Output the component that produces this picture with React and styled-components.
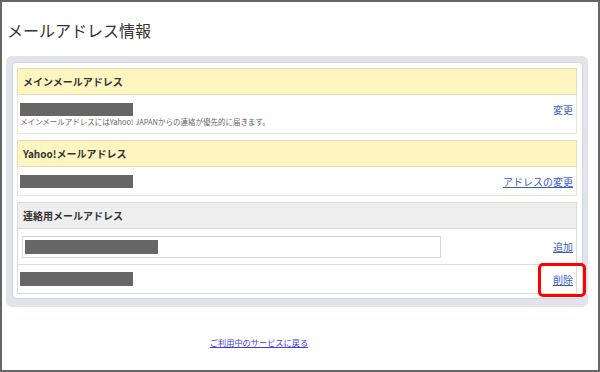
import React from "react";
import styled, { createGlobalStyle } from "styled-components";

const GlobalStyle = createGlobalStyle`
  * { box-sizing: border-box; }
  body {
    margin: 0;
    background: #fff;
    font-family: "Noto Sans CJK JP", "Noto Sans", sans-serif;
    color: #333;
  }
`;

const Frame = styled.div`
  width: 600px;
  height: 372px;
  border: 2px solid #666;
  background: #fff;
`;

const Title = styled.h1`
  margin: 0;
  padding: 18px 0 0 5px;
  font-size: 16px;
  line-height: 20px;
  font-weight: 400;
  color: #333;
`;

const Panel = styled.div`
  margin: 16px 0 0 4px;
  width: 582px;
  padding: 6px 5px 8px 6px;
  background: #e1e4ec;
  border-radius: 6px;
`;

const Inner = styled.div`
  background: #fff;
  border: 1px solid #d6d6d6;
  border-radius: 4px;
  padding: 5px 5px 4px 4px;
  display: flex;
  flex-direction: column;
  gap: 6px;
`;

const Section = styled.section`
  display: flex;
  flex-direction: column;
`;

const Header = styled.div`
  height: 27px;
  display: flex;
  align-items: center;
  padding-left: 5px;
  font-size: 10px;
  font-weight: 700;
  color: #333;
  background: ${(p) => (p.$gray ? "#eeeeee" : "#fff5c1")};
  border: 1px solid ${(p) => (p.$gray ? "#d9d9d9" : "#e4dcb4")};
`;

const Body = styled.div`
  border: 1px solid ${(p) => (p.$gray ? "#d9d9d9" : "#ebe6d4")};
  border-top: none;
  display: flex;
  flex-direction: column;
`;

const Row = styled.div`
  display: flex;
  align-items: center;
  justify-content: space-between;
  height: ${(p) => p.$h || "auto"};
  padding: ${(p) => p.$pad || "0 3px 0 2px"};
  border-bottom: ${(p) => (p.$divider ? "1px solid #dedede" : "none")};
`;

const Block = styled.div`
  padding: 8px 3px 6px 2px;
`;

const Masked = styled.div`
  width: ${(p) => p.$w || 113}px;
  height: ${(p) => p.$h || 13}px;
  background: #666;
`;

const Note = styled.p`
  margin: 1px 0 0;
  font-size: 7.5px;
  line-height: 10px;
  color: #666;
`;

const InputBox = styled.div`
  width: 419px;
  height: 22px;
  border: 1px solid #d8d8d8;
  padding: 3px 2px;
  display: flex;
  align-items: center;
`;

const Link = styled.a`
  font-size: 10px;
  line-height: 13px;
  color: #3b5cc8;
  text-decoration: ${(p) => (p.$plain ? "none" : "underline")};
  cursor: pointer;
`;

const LinkCell = styled.span`
  position: relative;
  display: inline-flex;
`;

const RedFrame = styled.span`
  position: absolute;
  right: -13px;
  top: 50%;
  margin-top: -16px;
  width: 48px;
  height: 34px;
  border: 3px solid #ff0000;
  border-radius: 5px;
  pointer-events: none;
`;

const Footer = styled.div`
  margin-top: 29px;
  padding-right: 82px;
  text-align: center;
  font-size: 8.2px;
  line-height: 12px;
`;

const BackLink = styled.a`
  font-size: 8.2px;
  line-height: 12px;
  color: #3b3bf0;
  text-decoration: underline;
  cursor: pointer;
`;

export default function App() {
  return (
    <>
      <GlobalStyle />
      <Frame>
        <Title>メールアドレス情報</Title>
        <Panel>
          <Inner>
            <Section>
              <Header>メインメールアドレス</Header>
              <Body>
                <Block>
                  <Row $pad="0">
                    <Masked />
                    <Link $plain>変更</Link>
                  </Row>
                  <Note>メインメールアドレスにはYahoo! JAPANからの連絡が優先的に届きます。</Note>
                </Block>
              </Body>
            </Section>

            <Section>
              <Header>Yahoo!メールアドレス</Header>
              <Body>
                <Row $h="28px">
                  <Masked />
                  <Link>アドレスの変更</Link>
                </Row>
              </Body>
            </Section>

            <Section>
              <Header $gray>連絡用メールアドレス</Header>
              <Body $gray>
                <Row $h="36px" $pad="0 3px 0 4px" $divider>
                  <InputBox>
                    <Masked $w={133} $h={14} />
                  </InputBox>
                  <Link>追加</Link>
                </Row>
                <Row $h="28px">
                  <Masked $h={14} />
                  <LinkCell>
                    <Link>削除</Link>
                    <RedFrame />
                  </LinkCell>
                </Row>
              </Body>
            </Section>
          </Inner>
        </Panel>
        <Footer>
          <BackLink>ご利用中のサービスに戻る</BackLink>
        </Footer>
      </Frame>
    </>
  );
}
